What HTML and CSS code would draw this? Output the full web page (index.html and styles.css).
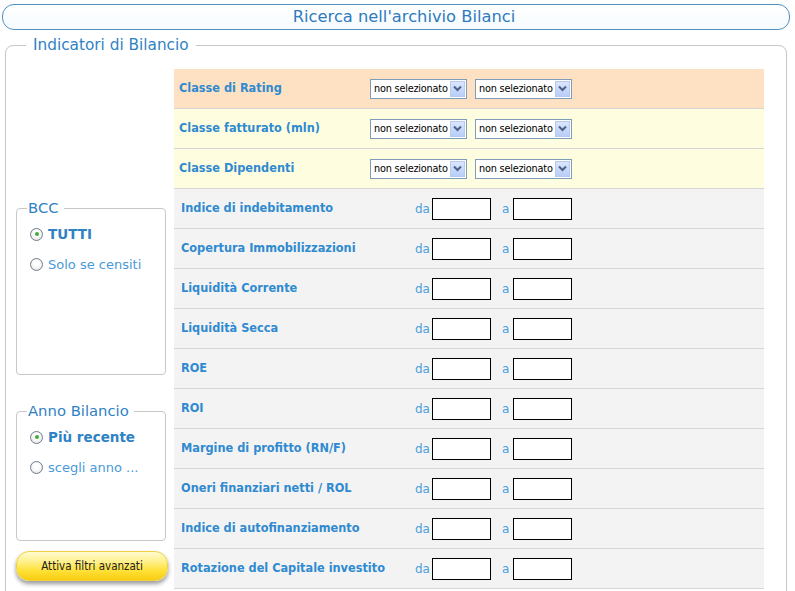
FILE: index.html
```html
<!DOCTYPE html>
<html lang="it">
<head>
<meta charset="utf-8">
<title>Ricerca nell'archivio Bilanci</title>
<link rel="stylesheet" href="styles.css">
</head>
<body>
<div class="header">Ricerca nell'archivio Bilanci</div>
<fieldset class="main">
  <legend class="main-legend">Indicatori di Bilancio</legend>
  <div class="layout">
    <div class="side">
      <fieldset class="box box-bcc">
        <legend class="box-legend">BCC</legend>
        <div class="radio checked"><span class="dot"></span><span class="rlabel strong">TUTTI</span></div>
        <div class="radio"><span class="dot"></span><span class="rlabel">Solo se censiti</span></div>
      </fieldset>
      <fieldset class="box box-anno">
        <legend class="box-legend">Anno Bilancio</legend>
        <div class="radio checked"><span class="dot"></span><span class="rlabel strong">Più recente</span></div>
        <div class="radio"><span class="dot"></span><span class="rlabel">scegli anno ...</span></div>
      </fieldset>
      <div class="btn">Attiva filtri avanzati</div>
    </div>
    <div class="grid">
      <div class="row peach">
        <div class="label sel">Classe di Rating</div>
        <div class="select"><span class="stext">non selezionato</span><span class="arrow"><svg width="9" height="7" viewBox="0 0 9 7"><path d="M1 1.5 L4.5 5 L8 1.5" fill="none" stroke="#4d6185" stroke-width="2"/></svg></span></div>
        <div class="select"><span class="stext">non selezionato</span><span class="arrow"><svg width="9" height="7" viewBox="0 0 9 7"><path d="M1 1.5 L4.5 5 L8 1.5" fill="none" stroke="#4d6185" stroke-width="2"/></svg></span></div>
      </div>
      <div class="row yellow">
        <div class="label sel">Classe fatturato (mln)</div>
        <div class="select"><span class="stext">non selezionato</span><span class="arrow"><svg width="9" height="7" viewBox="0 0 9 7"><path d="M1 1.5 L4.5 5 L8 1.5" fill="none" stroke="#4d6185" stroke-width="2"/></svg></span></div>
        <div class="select"><span class="stext">non selezionato</span><span class="arrow"><svg width="9" height="7" viewBox="0 0 9 7"><path d="M1 1.5 L4.5 5 L8 1.5" fill="none" stroke="#4d6185" stroke-width="2"/></svg></span></div>
      </div>
      <div class="row yellow">
        <div class="label sel">Classe Dipendenti</div>
        <div class="select"><span class="stext">non selezionato</span><span class="arrow"><svg width="9" height="7" viewBox="0 0 9 7"><path d="M1 1.5 L4.5 5 L8 1.5" fill="none" stroke="#4d6185" stroke-width="2"/></svg></span></div>
        <div class="select"><span class="stext">non selezionato</span><span class="arrow"><svg width="9" height="7" viewBox="0 0 9 7"><path d="M1 1.5 L4.5 5 L8 1.5" fill="none" stroke="#4d6185" stroke-width="2"/></svg></span></div>
      </div>
      <div class="row grey"><div class="label inp">Indice di indebitamento</div><span class="da">da</span><span class="field"></span><span class="a">a</span><span class="field"></span></div>
      <div class="row grey"><div class="label inp">Copertura Immobilizzazioni</div><span class="da">da</span><span class="field"></span><span class="a">a</span><span class="field"></span></div>
      <div class="row grey"><div class="label inp">Liquidità Corrente</div><span class="da">da</span><span class="field"></span><span class="a">a</span><span class="field"></span></div>
      <div class="row grey"><div class="label inp">Liquidità Secca</div><span class="da">da</span><span class="field"></span><span class="a">a</span><span class="field"></span></div>
      <div class="row grey"><div class="label inp">ROE</div><span class="da">da</span><span class="field"></span><span class="a">a</span><span class="field"></span></div>
      <div class="row grey"><div class="label inp">ROI</div><span class="da">da</span><span class="field"></span><span class="a">a</span><span class="field"></span></div>
      <div class="row grey"><div class="label inp">Margine di profitto (RN/F)</div><span class="da">da</span><span class="field"></span><span class="a">a</span><span class="field"></span></div>
      <div class="row grey"><div class="label inp">Oneri finanziari netti / ROL</div><span class="da">da</span><span class="field"></span><span class="a">a</span><span class="field"></span></div>
      <div class="row grey"><div class="label inp">Indice di autofinanziamento</div><span class="da">da</span><span class="field"></span><span class="a">a</span><span class="field"></span></div>
      <div class="row grey"><div class="label inp">Rotazione del Capitale investito</div><span class="da">da</span><span class="field"></span><span class="a">a</span><span class="field"></span></div>
    </div>
  </div>
</fieldset>
</body>
</html>
```
FILE: styles.css
```css
html, body {
  margin: 0;
  padding: 0;
  background: #ffffff;
  font-family: "DejaVu Sans", Verdana, sans-serif;
  overflow: hidden;
}

.header {
  margin: 4px 5px 0 2px;
  height: 24px;
  line-height: 24px;
  padding-left: 16px;
  border: 1px solid #4f8fbf;
  border-radius: 12px;
  background: linear-gradient(#ffffff, #f6fbff);
  text-align: center;
  font-size: 16.3px;
  color: #2f7bbd;
}

.main {
  margin: 7px 8px 0 5px;
  padding: 0;
  border: 1px solid #c6c6c6;
  border-radius: 8px;
  min-height: 560px;
  min-width: 0;
}

.main-legend {
  margin-left: 20px;
  padding: 0 7px;
  font-size: 15.3px;
  line-height: 16px;
  color: #2f82c4;
}

.layout {
  display: flex;
  padding-top: 16px;
}

.side {
  width: 168px;
  flex: none;
  display: flex;
  flex-direction: column;
}

.box {
  margin: 0 0 0 10px;
  box-sizing: border-box;
  width: 150px;
  padding: 0 0 0 13px;
  border: 1px solid #c8c8c8;
  border-radius: 4px;
}

.box-bcc {
  margin-top: 131px;
  height: 175px;
}

.box-anno {
  margin-top: 28px;
  height: 138px;
}

.box-legend {
  margin-left: -3px;
  padding: 0 5px 0 1px;
  font-size: 14.8px;
  line-height: 16px;
  color: #2f82c4;
}

.radio {
  display: flex;
  align-items: center;
  height: 30px;
  gap: 5px;
}

.box .radio:first-of-type {
  margin-top: 3px;
}

.dot {
  width: 11px;
  height: 11px;
  border: 1px solid #6f7d8c;
  border-radius: 50%;
  background: radial-gradient(circle at 50% 40%, #ffffff 30%, #dcdcdc 100%);
  display: flex;
  align-items: center;
  justify-content: center;
}

.radio.checked .dot::after {
  content: "";
  width: 4px;
  height: 4px;
  border-radius: 50%;
  background: #3fae3a;
}

.rlabel {
  font-size: 13px;
  color: #4a9ad8;
}

.rlabel.strong {
  font-size: 13.5px;
  font-weight: bold;
  color: #2f82c4;
}

.btn {
  margin: 10px 0 0 10px;
  width: 150px;
  height: 28px;
  line-height: 28px;
  border: 1px solid #f0d040;
  border-radius: 13px;
  background: linear-gradient(#fffbd0 0%, #fff08a 35%, #ffe23a 65%, #f7cc10 100%);
  box-shadow: 0 3px 4px rgba(0, 0, 0, 0.4);
  text-align: center;
  font-family: "DejaVu Sans Condensed", "DejaVu Sans", sans-serif;
  font-stretch: condensed;
  font-size: 11.5px;
  color: #222222;
}

.grid {
  width: 590px;
  flex: none;
}

.row {
  height: 39px;
  border-bottom: 1px solid #d6d6d6;
  display: flex;
  align-items: center;
}

.peach { background: #fee1c2; }
.yellow { background: #fffddf; }
.grey { background: #f3f3f3; }

.label {
  font-family: "DejaVu Sans Condensed", "DejaVu Sans", sans-serif;
  font-stretch: condensed;
  font-weight: bold;
  font-size: 12.6px;
  color: #2f8ad0;
  box-sizing: border-box;
  flex: none;
  padding-bottom: 2px;
}

.label.sel {
  width: 196px;
  padding-left: 5px;
}

.label.inp {
  width: 241px;
  padding-left: 7px;
}

.select {
  width: 95px;
  height: 18px;
  border: 1px solid #7f9db9;
  background: #ffffff;
  display: flex;
  align-items: center;
  justify-content: space-between;
  margin-right: 8px;
}

.stext {
  font-family: "DejaVu Sans Condensed", "DejaVu Sans", sans-serif;
  font-stretch: condensed;
  font-size: 10.8px;
  letter-spacing: -0.2px;
  color: #000000;
  padding-left: 3px;
  white-space: nowrap;
}

.arrow {
  width: 15px;
  height: 16px;
  margin-right: 1px;
  border: 1px solid #b7c9f0;
  box-sizing: border-box;
  background: linear-gradient(#dbe6fe, #b9cdf8);
  display: flex;
  align-items: center;
  justify-content: center;
}

.da, .a {
  font-size: 12px;
  color: #4aa0e0;
}

.da {
  width: 17px;
}

.a {
  margin-left: 11px;
  width: 11px;
}

.field {
  width: 57px;
  height: 20px;
  border: 1px solid #000000;
  background: #ffffff;
}
```
